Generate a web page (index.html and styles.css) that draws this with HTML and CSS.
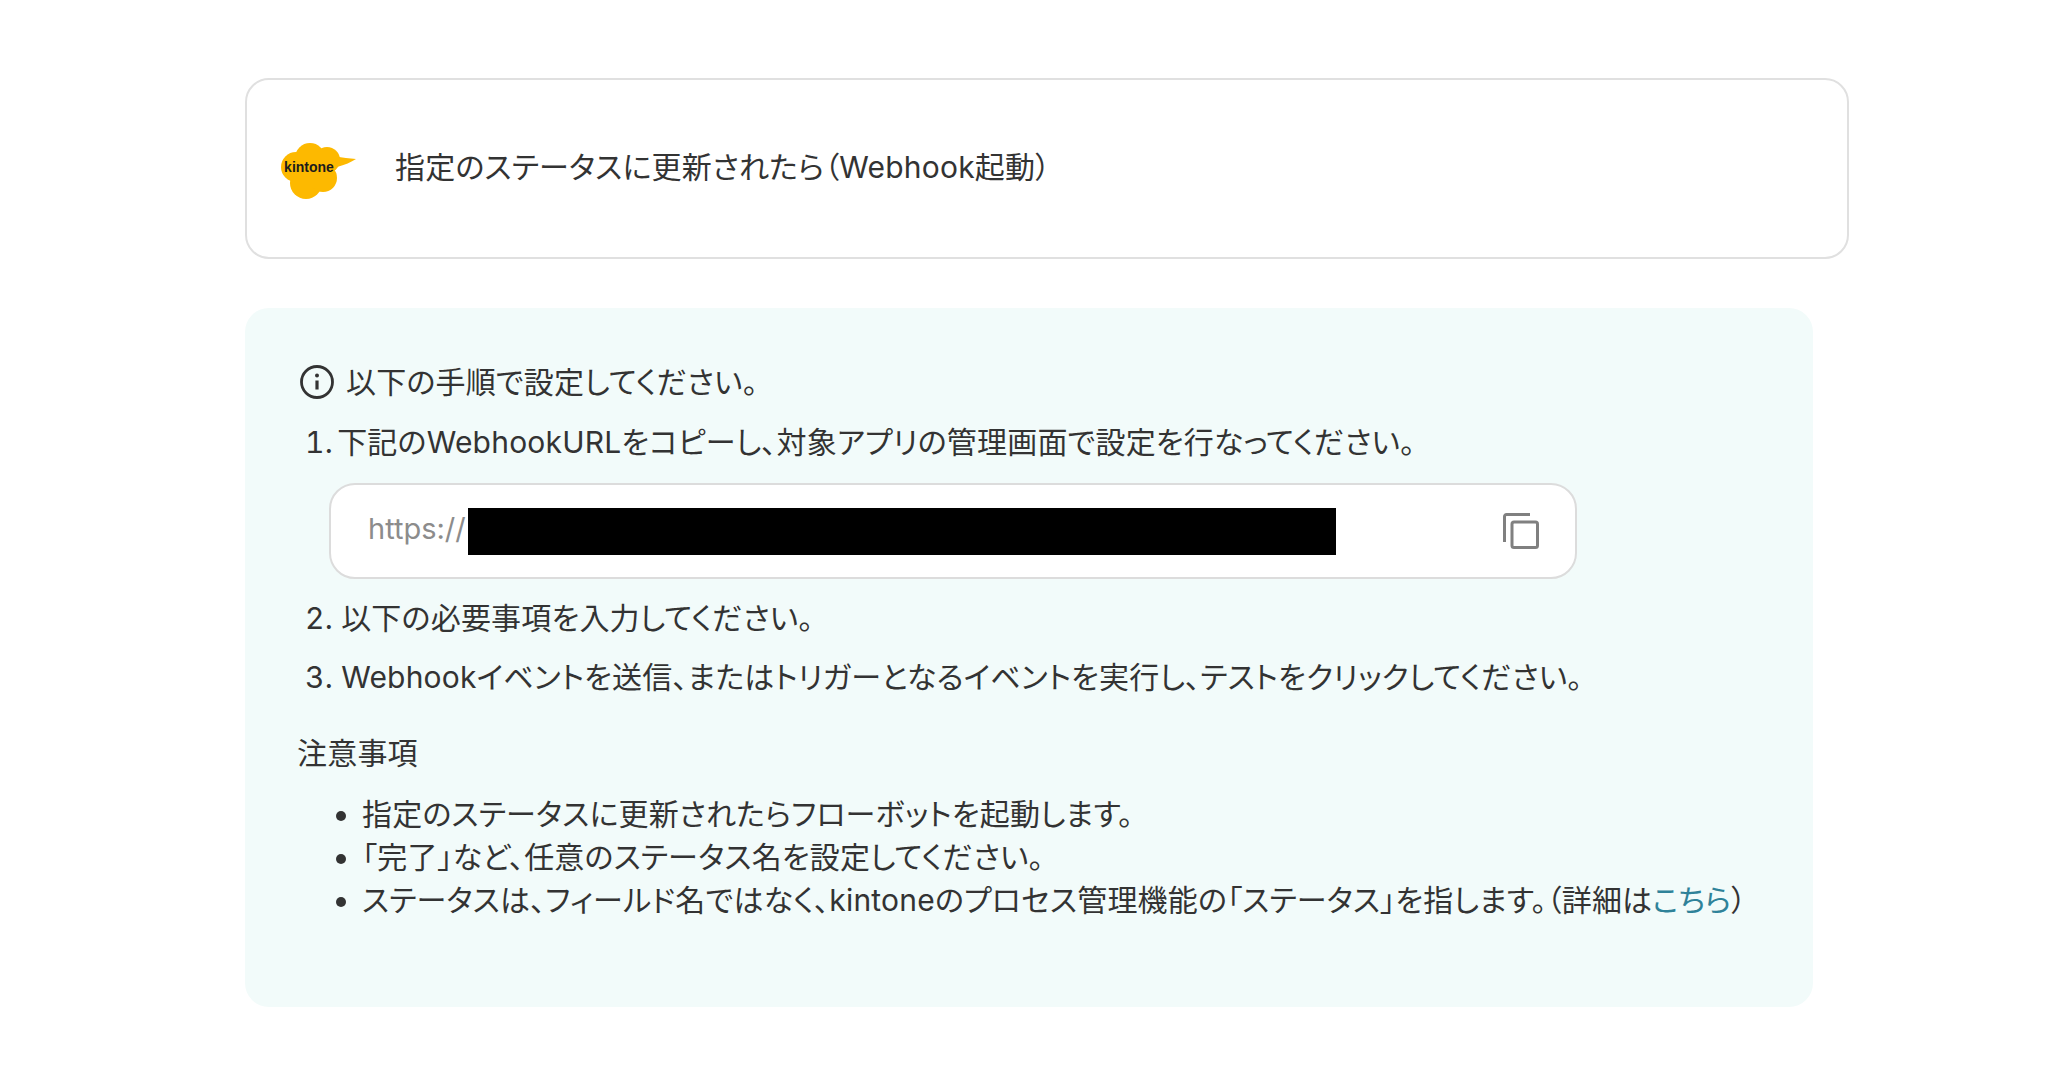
FILE: index.html
```html
<!DOCTYPE html>
<html lang="ja">
<head>
    <meta charset="UTF-8">
    <meta name="viewport" content="width=device-width, initial-scale=1.0">
    <title>Webhook設定</title>
    <link rel="stylesheet" href="styles.css">
</head>
<body>
    <div class="page">
        <!-- Trigger card -->
        <div class="trigger-card">
            <svg class="logo" viewBox="0 0 80 60" width="80" height="60" aria-hidden="true">
                <g fill="#fdb900">
                    <circle cx="17" cy="27" r="15"/>
                    <circle cx="31" cy="18" r="15"/>
                    <circle cx="48" cy="20" r="13"/>
                    <circle cx="27" cy="43" r="16"/>
                    <circle cx="44" cy="38" r="14"/>
                    <circle cx="30" cy="30" r="18"/>
                    <path d="M56 16 C64 18 70 18 77 19 C72 22 66 25 58 27 Z"/>
                </g>
                <text class="logo-text" x="30" y="32" text-anchor="middle">kintone</text>
            </svg>
            <span class="trigger-title">指定のステータスに更新されたら（Webhook起動）</span>
        </div>

        <!-- Instructions -->
        <div class="info-panel">
            <div class="info-head">
                <svg class="info-icon" viewBox="0 0 36 36" width="36" height="36" fill="none" stroke="#333" aria-hidden="true">
                    <circle cx="18" cy="18" r="15.5" stroke-width="2.8"/>
                    <path d="M18 16.5v9" stroke-width="3.2"/>
                    <circle cx="18" cy="11.5" r="2" fill="#333" stroke="none"/>
                </svg>
                <span>以下の手順で設定してください。</span>
            </div>

            <ol class="steps">
                <li><span class="step-first">下記のWebhookURLをコピーし、対象アプリの管理画面で設定を行なってください。</span>
                    <div class="url-box">
                        <span class="url-text">https://</span>
                        <span class="redacted"></span>
                        <svg class="copy-icon" viewBox="0 0 36 36" width="36" height="36" fill="none" stroke="#808080" stroke-width="3" aria-hidden="true">
                            <path d="M1.5 29V3.5a2 2 0 0 1 2-2H27"/>
                            <rect x="9" y="9" width="25.5" height="25.5" rx="2"/>
                        </svg>
                    </div>
                </li>
                <li>以下の必要事項を入力してください。</li>
                <li>Webhookイベントを送信、またはトリガーとなるイベントを実行し、テストをクリックしてください。</li>
            </ol>

            <h2 class="notes-title">注意事項</h2>
            <ul class="notes">
                <li>指定のステータスに更新されたらフローボットを起動します。</li>
                <li>「完了」など、任意のステータス名を設定してください。</li>
                <li>ステータスは、フィールド名ではなく、kintoneのプロセス管理機能の「ステータス」を指します。（詳細は<a href="#">こちら</a>）</li>
            </ul>
        </div>
    </div>
</body>
</html>
```

FILE: styles.css
```css
body {
    font-family: Inter, "Noto Sans CJK JP", sans-serif;
    font-feature-settings: "palt";
    font-size: 30px;
    letter-spacing: 0.2px;
    background: #fff;
    color: #333;
    margin: 0;
    padding: 0;
}

.page {
    padding: 78px 0 0 245px;
}

.trigger-card {
    display: flex;
    align-items: center;
    gap: 36px;
    box-sizing: border-box;
    width: 1604px;
    height: 181px;
    padding: 0 0 0 32px;
    background: #fff;
    border: 2px solid #e0e0e0;
    border-radius: 24px;
}

.logo {
    margin-top: 2px;
}

.logo-text {
    font-family: "Liberation Sans", sans-serif;
    font-size: 14px;
    font-weight: 700;
    letter-spacing: 0;
    fill: #1c1c1c;
}

.trigger-title {
    margin-top: -3px;
    line-height: 40px;
}

.info-panel {
    box-sizing: border-box;
    width: 1568px;
    height: 699px;
    margin-top: 49px;
    padding: 52px 0 0 54px;
    background: #f2fbfa;
    border-radius: 24px;
}

.info-head {
    display: flex;
    align-items: center;
    gap: 11px;
    height: 40px;
}

.info-icon {
    margin-top: 3px;
}

.steps {
    margin: 22px 0 0;
    padding: 0 0 0 6px;
    list-style-position: inside;
    line-height: 40px;
}

.steps li + li {
    margin-top: 19px;
}

.step-first {
    margin-left: -4px;
}

.url-box {
    display: flex;
    align-items: center;
    box-sizing: border-box;
    width: 1248px;
    height: 96px;
    margin: 21px 0 13px 24px;
    padding: 0 36px 0 37px;
    background: #fff;
    border: 2px solid #dcdcdc;
    border-radius: 26px;
}

.url-text {
    position: relative;
    top: -2px;
    font-size: 29px;
    letter-spacing: 0;
    color: #8c8c8c;
}

.redacted {
    width: 868px;
    height: 47px;
    margin-left: 2px;
    background: #000;
}

.copy-icon {
    margin-left: auto;
}

.notes-title {
    margin: 36px 0 0 -2px;
    font-size: 30px;
    font-weight: 400;
    line-height: 40px;
}

.notes {
    margin: 20px 0 0;
    padding: 0 0 0 63px;
    line-height: 43px;
}

.notes a {
    color: #2f8299;
    text-decoration: none;
}
```
